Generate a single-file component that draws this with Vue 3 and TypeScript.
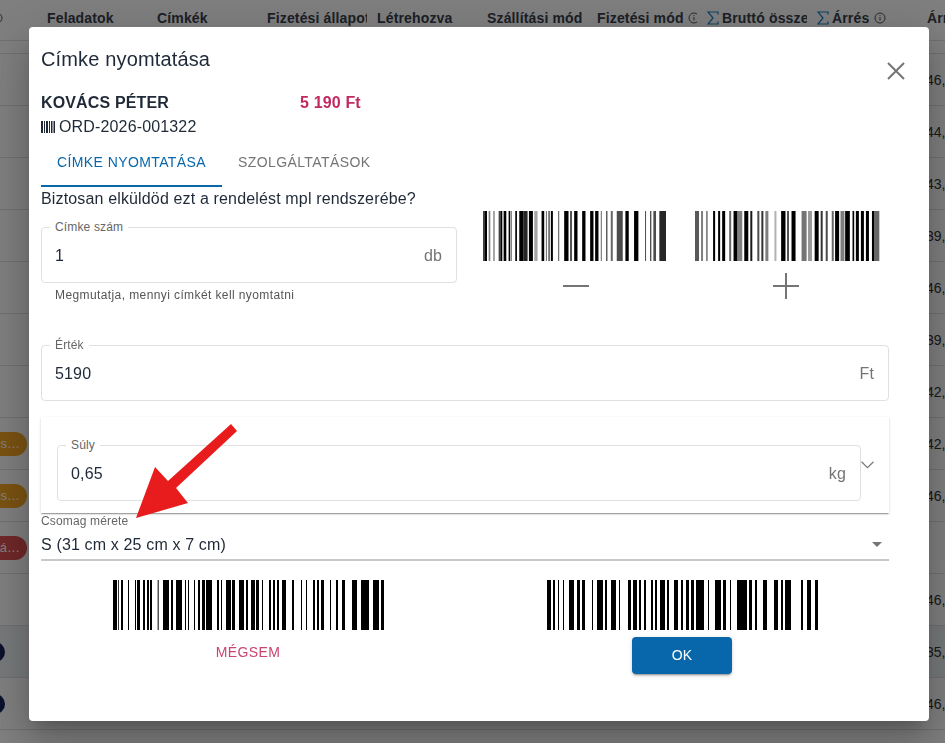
<script setup lang="ts">
type Bar = [number, number, number?]

const columns = ['Címkék', 'Fizetési állapot', 'Létrehozva', 'Szállítási mód']

interface Row { value: string; mark?: string; text?: string; tint?: boolean }
const rows: Row[] = [
  { value: '46,' }, { value: '44,' }, { value: '43,' }, { value: '39,' }, { value: '46,' },
  { value: '39,' }, { value: '42,' },
  { value: '42,', mark: 'orange', text: 's…' },
  { value: '46,', mark: 'orange', text: 's…' },
  { value: '', mark: 'red', text: 'á…' },
  { value: '46,' },
  { value: '35,', mark: 'dot', tint: true },
  { value: '46,', mark: 'dot' },
]

const code1: Bar[] = [[8,14,.75],[14,20],[25,30,.5],[38,44,.35],[55,62,.75],[62,66],[70,78],[85,90],[92,95,.5],[105,110],[117,130],[130,142,.85],[146,158],[162,172,.35],[184,192],[197,200,.6],[205,208],[212,218],[234,237,.7],[252,265],[270,275,.8],[282,292],[306,316],[330,340],[345,355],[362,365,.6],[378,382,.7],[392,398,.6],[410,428,.7],[436,446],[462,475],[495,498,.7],[510,514,.7],[520,528,.7],[538,558,.85]]
const code2: Bar[] = [[15,27,.65],[33,39,.5],[48,53,.5],[69,75],[84,90],[96,105],[117,123,.6],[130,141],[141,156,.5],[162,174],[180,186,.9],[201,207,.7],[213,219,.8],[225,234,.5],[252,258,.3],[272,285],[290,295,.8],[303,315],[333,348,.55],[352,364,.4],[372,384],[390,396,.8],[405,411,.7],[423,429,.6],[433,445],[449,461,.5],[463,477],[485,490],[495,504],[510,519],[525,534],[543,550],[550,565,.6]]
const code3: Bar[] = [[36,48],[51,54,.8],[60,66],[81,84],[102,105],[108,117],[126,132],[138,144],[147,153],[170,173],[186,204],[210,216],[225,243],[252,255],[261,264],[279,282],[291,297],[303,312],[315,333],[348,354],[360,363],[375,390],[393,402],[414,429],[435,441],[450,462],[465,474],[483,486],[504,510],[516,522],[528,534],[543,555],[573,579],[600,603],[615,618],[636,642],[648,654],[660,669],[687,690],[705,711],[723,732],[753,768],[780,804],[816,834],[840,849]]
const code4: Bar[] = [[48,60],[66,72],[81,84],[96,99],[114,129],[138,147],[153,162],[183,186],[198,216],[222,228],[240,255],[264,267],[291,300],[306,318],[324,330],[339,345],[360,366],[372,378],[387,402],[408,414],[429,441],[450,456],[465,474],[480,489],[495,519],[531,534],[552,570],[576,585],[597,600],[618,648],[654,663],[672,678],[696,708],[729,741],[750,756],[762,780],[810,816],[828,840],[852,861]]
</script>

<template>
  <div class="page">
    <div class="table-head">
      <div class="cell first">
        <svg class="info clipped" viewBox="0 0 12 12"><circle cx="6" cy="6" r="5" /><path d="M6 5v3.5M6 3.2v.9" /></svg>
      </div>
      <div class="cell"><span class="head-label">Feladatok</span></div>
      <div v-for="c in columns" :key="c" class="cell"><span class="head-label">{{ c }}</span></div>
      <div class="cell">
        <span class="head-label">Fizetési mód</span>
        <svg class="info tight" viewBox="0 0 12 12"><circle cx="6" cy="6" r="5" /><path d="M6 5v3.5M6 3.2v.9" /></svg>
      </div>
      <div class="cell">
        <svg class="sigma" viewBox="0 0 12 14"><path d="M11 3.500V1H1l5 6-5 6h10v-2.500" /></svg>
        <span class="head-label">Bruttó összeg</span>
      </div>
      <div class="cell">
        <svg class="sigma" viewBox="0 0 12 14"><path d="M11 3.500V1H1l5 6-5 6h10v-2.500" /></svg>
        <span class="head-label">Árrés</span>
        <svg class="info" viewBox="0 0 12 12"><circle cx="6" cy="6" r="5" /><path d="M6 5v3.5M6 3.2v.9" /></svg>
      </div>
      <div class="cell"><span class="head-label">Árrés</span></div>
    </div>
    <div class="filter-row"></div>
    <div v-for="(r, i) in rows" :key="i" class="row" :class="{ tint: r.tint }">
      <div class="mark-cell">
        <span v-if="r.mark === 'orange' || r.mark === 'red'" class="pill" :class="r.mark">{{ r.text }}</span>
        <span v-else-if="r.mark === 'dot'" class="dot"></span>
      </div>
      <div class="value">{{ r.value }}</div>
    </div>
  </div>

  <div class="overlay">
    <section class="modal">
      <header class="modal-head">
        <h2 class="title">Címke nyomtatása</h2>
        <svg class="close" viewBox="0 0 18 18"><path d="M1 1l16 16M17 1L1 17" /></svg>
      </header>

      <div class="customer">
        <strong class="name">KOVÁCS PÉTER</strong>
        <strong class="price">5 190 Ft</strong>
      </div>
      <div class="order">
        <svg class="bar-icon" viewBox="0 0 14 12"><path d="M0 0h2v12H0zM3 0h1v12H3zM5 0h2v12H5zM8 0h1v12H8zM10 0h1.500v12H10zM12.500 0H14v12h-1.500z" /></svg>
        <span>ORD-2026-001322</span>
      </div>

      <nav class="tabs">
        <span class="tab active">Címke nyomtatása</span>
        <span class="tab">Szolgáltatások</span>
      </nav>

      <p class="question">Biztosan elküldöd ezt a rendelést mpl rendszerébe?</p>

      <div class="qty-row">
        <div class="qty-field">
          <div class="field">
            <label class="field-label">Címke szám</label>
            <span class="field-value">1</span>
            <span class="suffix">db</span>
          </div>
          <p class="helper">Megmutatja, mennyi címkét kell nyomtatni</p>
        </div>
        <div class="code-col">
          <svg class="code small" viewBox="8 0 556 150" preserveAspectRatio="none">
            <rect v-for="(b, i) in code1" :key="i" :x="b[0]" y="0" :width="b[1] - b[0]" height="150" :opacity="b[2] ?? 1" />
          </svg>
          <svg class="step minus" viewBox="0 0 26 26"><path d="M0 13h26" /></svg>
        </div>
        <div class="code-col">
          <svg class="code small" viewBox="15 0 552 150" preserveAspectRatio="none">
            <rect v-for="(b, i) in code2" :key="i" :x="b[0]" y="0" :width="b[1] - b[0]" height="150" :opacity="b[2] ?? 1" />
          </svg>
          <svg class="step plus" viewBox="0 0 26 26"><path d="M0 13h26M13 0v26" /></svg>
        </div>
      </div>

      <div class="field value-field">
        <label class="field-label">Érték</label>
        <span class="field-value">5190</span>
        <span class="suffix">Ft</span>
      </div>

      <div class="accordion">
        <div class="field">
          <label class="field-label">Súly</label>
          <span class="field-value">0,65</span>
          <span class="suffix">kg</span>
        </div>
        <svg class="chevron" viewBox="0 0 12 7"><path d="M.5.500L6 6l5.500-5.500" /></svg>
      </div>

      <div class="select">
        <label class="select-label">Csomag mérete</label>
        <div class="select-value">
          <span>S (31 cm x 25 cm x 7 cm)</span>
          <i class="caret"></i>
        </div>
      </div>

      <div class="actions">
        <div class="action">
          <svg class="code wide" viewBox="36 0 813 150" preserveAspectRatio="none">
            <rect v-for="(b, i) in code3" :key="i" :x="b[0]" y="0" :width="b[1] - b[0]" height="150" :opacity="b[2] ?? 1" />
          </svg>
          <span class="cancel">Mégsem</span>
        </div>
        <div class="action">
          <svg class="code wide" viewBox="48 0 813 150" preserveAspectRatio="none">
            <rect v-for="(b, i) in code4" :key="i" :x="b[0]" y="0" :width="b[1] - b[0]" height="150" :opacity="b[2] ?? 1" />
          </svg>
          <span class="ok">OK</span>
        </div>
      </div>

      <svg class="arrow" viewBox="0 0 110 100">
        <polygon points="1,95 20,44 33,58 96,1 102,8 41,65 53,80" />
      </svg>
    </section>
  </div>
</template>

<style>
html, body { margin: 0; overflow: hidden; }
</style>

<style scoped>
.page {
  width: 945px;
  height: 743px;
  overflow: hidden;
  background: #fff;
  font-family: "Liberation Sans", Arial, sans-serif;
  color: #333;
}
.table-head {
  display: grid;
  grid-template-columns: 47px repeat(8, 110px) 110px;
  height: 41px;
  align-items: center;
  box-sizing: border-box;
  border-bottom: 1px solid #e0e0e0;
  padding-bottom: 5px;
}
.cell {
  display: flex;
  align-items: center;
  width: 100px;
  overflow: hidden;
  font-size: 14px;
  font-weight: 700;
  letter-spacing: 0.15px;
  color: #38404c;
  white-space: nowrap;
}
.cell.first { width: 47px; }
.head-label { flex: none; }
.sigma {
  flex: none;
  width: 12px;
  height: 14px;
  margin-right: 3px;
  fill: none;
  stroke: #1683c9;
  stroke-width: 1.2;
}
.info {
  flex: none;
  width: 12px;
  height: 12px;
  margin-left: 5px;
  fill: none;
  stroke: #555;
  stroke-width: 1;
}
.info.tight { margin-left: 4px; }
.info.clipped { margin-left: -9px; }
.filter-row {
  height: 12px;
  border-bottom: 1px solid #e0e0e0;
}
.row {
  height: 51px;
  border-bottom: 1px solid #e0e0e0;
  display: flex;
  justify-content: space-between;
  align-items: center;
  font-size: 14px;
}
.row.tint { background: #eef3f6; }
.mark-cell { width: 47px; display: flex; align-items: center; }
.pill {
  flex: none;
  width: 50px;
  height: 24px;
  margin-left: -23px;
  border-radius: 12px;
  box-sizing: border-box;
  font-size: 13px;
  line-height: 24px;
  text-align: right;
  padding-right: 7px;
  color: #fff;
}
.pill.orange { background: #f5a623; }
.pill.red { background: #e05050; }
.dot {
  flex: none;
  width: 20px;
  height: 20px;
  margin-left: -15px;
  border-radius: 50%;
  background: #16205c;
}
.value { width: 19px; white-space: nowrap; }

.overlay {
  position: fixed;
  inset: 0;
  background: rgba(0, 0, 0, 0.5);
  font-family: "Liberation Sans", Arial, sans-serif;
  color: #1f2937;
  letter-spacing: 0.15px;
}
.modal {
  position: absolute;
  left: 29px;
  top: 27px;
  width: 900px;
  height: 694px;
  box-sizing: border-box;
  padding: 0 40px 0 12px;
  background: #fff;
  border-radius: 4px;
  box-shadow: 0 11px 15px -7px rgba(0,0,0,.2), 0 24px 38px 3px rgba(0,0,0,.14), 0 9px 46px 8px rgba(0,0,0,.12);
}
.modal-head {
  height: 64px;
  display: flex;
  justify-content: space-between;
  align-items: flex-start;
}
.title {
  margin: 19px 0 0;
  font-size: 20px;
  line-height: 26px;
  font-weight: 400;
}
.close {
  width: 18px;
  height: 18px;
  margin: 35px -16px 0 0;
  fill: none;
  stroke: #757575;
  stroke-width: 2;
}
.customer {
  display: flex;
  height: 24px;
  align-items: center;
  font-size: 16px;
}
.name { width: 259px; font-weight: 700; }
.price { color: #c2295f; font-weight: 700; }
.order {
  display: flex;
  align-items: center;
  height: 24px;
  font-size: 16px;
  gap: 4px;
}
.bar-icon { width: 14px; height: 12px; fill: #1f2937; }
.tabs { display: flex; height: 48px; }
.tab {
  box-sizing: border-box;
  padding: 0 16px;
  line-height: 46px;
  font-size: 14px;
  letter-spacing: 0.4px;
  text-transform: uppercase;
  color: #757575;
}
.tab.active {
  color: #0867ab;
  width: 181px;
  border-bottom: 2px solid #0867ab;
  height: 48px;
}
.question {
  margin: 0;
  font-size: 16px;
  line-height: 24px;
}
.qty-row {
  display: flex;
  height: 134px;
}
.qty-field { flex: none; width: 416px; margin-right: 26px; padding-top: 16px; }
.field {
  position: relative;
  box-sizing: border-box;
  height: 56px;
  border: 1px solid #e0e0e0;
  border-radius: 4px;
  padding: 1px 14px 0 13px;
  display: flex;
  align-items: center;
  justify-content: space-between;
  font-size: 16px;
}
.field-label {
  position: absolute;
  left: 8px;
  top: -8px;
  padding: 0 5px;
  background: #fff;
  font-size: 12px;
  line-height: 14px;
  color: #666;
}
.suffix { color: #757575; }
.helper {
  margin: 3px 0 0 14px;
  font-size: 12px;
  line-height: 18px;
  letter-spacing: 0.4px;
  color: #555;
}
.code-col {
  flex: none;
  width: 185px;
  margin-right: 27px;
  display: flex;
  flex-direction: column;
  align-items: center;
}
.code { display: block; height: 50px; fill: #000; }
.code.small { width: 185px; }
.code.wide { width: 271px; }
.step {
  width: 26px;
  height: 26px;
  margin-top: 12px;
  fill: none;
  stroke: #757575;
  stroke-width: 2;
}
.step.plus { margin-right: 3px; }
.value-field { width: 848px; }
.accordion {
  box-sizing: border-box;
  width: 848px;
  height: 96px;
  margin-top: 16px;
  padding: 28px 16px 0;
  display: flex;
  align-items: flex-start;
  box-shadow: 0 2px 1px -1px rgba(0,0,0,.2), 0 1px 1px 0 rgba(0,0,0,.14), 0 1px 3px 0 rgba(0,0,0,.12);
}
.accordion .field { flex: none; width: 804px; }
.chevron {
  flex: none;
  width: 13px;
  height: 8px;
  margin: 16px 0 0 0;
  fill: none;
  stroke: #757575;
  stroke-width: 1;
}
.select { width: 848px; }
.select-label {
  display: block;
  padding-top: 1px;
  font-size: 12px;
  line-height: 14px;
  color: #666;
}
.select-value {
  box-sizing: border-box;
  height: 33px;
  padding-top: 2px;
  display: flex;
  justify-content: space-between;
  align-items: center;
  font-size: 16px;
  border-bottom: 2px solid #c8c8c8;
}
.caret {
  width: 0;
  height: 0;
  margin-right: 7px;
  border-left: 5px solid transparent;
  border-right: 5px solid transparent;
  border-top: 5px solid #757575;
}
.actions {
  width: 848px;
  display: grid;
  grid-template-columns: 1fr 1fr;
  column-gap: 20px;
  margin-top: 19px;
}
.action { display: flex; flex-direction: column; align-items: center; }
.cancel {
  margin-top: 13px;
  font-size: 14px;
  line-height: 18px;
  letter-spacing: 0.4px;
  text-transform: uppercase;
  color: #c9456f;
}
.ok {
  box-sizing: border-box;
  width: 100px;
  height: 37px;
  margin-top: 7px;
  border-radius: 4px;
  background: #0867ab;
  color: #fff;
  font-size: 14px;
  font-weight: 500;
  line-height: 37px;
  text-align: center;
  box-shadow: 0 3px 1px -2px rgba(0,0,0,.2), 0 2px 2px 0 rgba(0,0,0,.14), 0 1px 5px 0 rgba(0,0,0,.12);
}
.arrow {
  position: absolute;
  left: 106px;
  top: 396px;
  width: 110px;
  height: 100px;
  fill: #e81c1c;
}
</style>
